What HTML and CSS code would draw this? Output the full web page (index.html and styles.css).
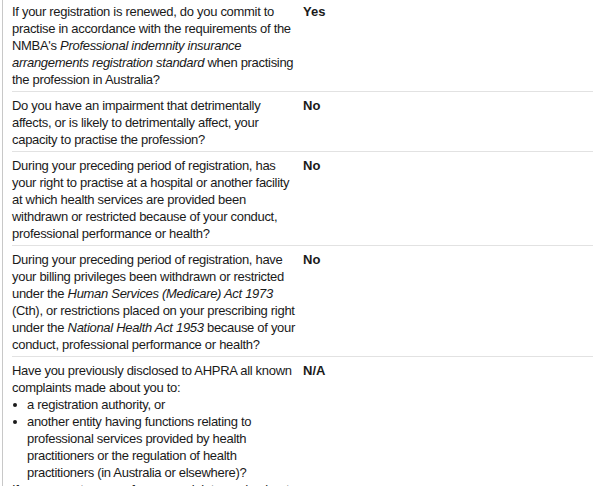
FILE: index.html
```html
<!DOCTYPE html>
<html>
<head>
<meta charset="utf-8">
<link rel="stylesheet" href="styles.css">
</head>
<body>
<div class="panel">
  <div class="row first">
    <div class="q">If your registration is renewed, do you commit to practise in accordance with the requirements of the NMBA's <em>Professional indemnity insurance arrangements registration standard</em> when practising the profession in Australia?</div>
    <div class="a">Yes</div>
  </div>
  <div class="row">
    <div class="q">Do you have an impairment that detrimentally affects, or is likely to detrimentally affect, your capacity to practise the profession?</div>
    <div class="a">No</div>
  </div>
  <div class="row">
    <div class="q">During your preceding period of registration, has your right to practise at a hospital or another facility at which health services are provided been withdrawn or restricted because of your conduct, professional performance or health?</div>
    <div class="a">No</div>
  </div>
  <div class="row">
    <div class="q">During your preceding period of registration, have your billing privileges been withdrawn or restricted under the <em>Human Services (Medicare) Act 1973</em> (Cth), or restrictions placed on your prescribing right under the <em>National Health Act 1953</em> because of your conduct, professional performance or health?</div>
    <div class="a">No</div>
  </div>
  <div class="row">
    <div class="q">Have you previously disclosed to AHPRA all known complaints made about you to:
      <ul class="list">
        <li>a registration authority, or</li>
        <li>another entity having functions relating to professional services provided by health practitioners or the regulation of health practitioners (in Australia or elsewhere)?</li>
      </ul>
      If you are not aware of any complaints made about you, select N/A.
    </div>
    <div class="a">N/A</div>
  </div>
</div>
</body>
</html>
```

FILE: styles.css
```css
html, body {
  margin: 0;
  padding: 0;
  background: #ffffff;
}
body {
  font-family: "Liberation Sans", Arial, sans-serif;
  font-size: 13px;
  line-height: 17px;
  letter-spacing: -0.3px;
  color: #1a1a1a;
  height: 486px;
  overflow: hidden;
}
.panel {
  margin-left: 2px;
  border-left: 1px solid #c8c8c8;
  padding-left: 9px;
  width: 581px;
  min-height: 486px;
}
.row {
  display: grid;
  grid-template-columns: 291px 1fr;
  border-bottom: 1px solid #e2e2e2;
  padding: 5px 0 3px;
}
.row.first {
  padding-top: 3px;
}
.q {
  padding-right: 7px;
}
.q em {
  font-style: italic;
}
.a {
  font-weight: bold;
  letter-spacing: 0;
}
.list {
  margin: 0;
  padding: 0;
  list-style: none;
}
.list li {
  position: relative;
  padding-left: 15px;
}
.list li::before {
  content: "";
  position: absolute;
  left: 1px;
  top: 7px;
  width: 4px;
  height: 4px;
  border-radius: 50%;
  background: #1a1a1a;
}
```
